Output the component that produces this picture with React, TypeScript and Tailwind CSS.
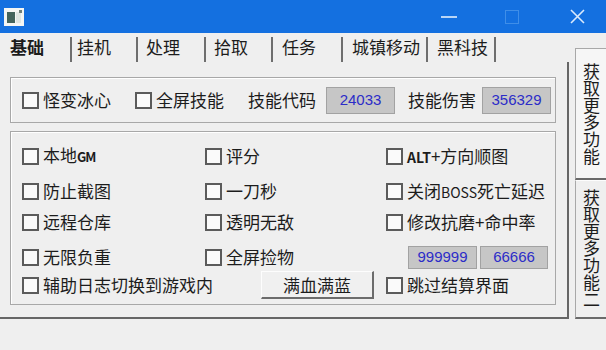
import type { ReactNode } from "react";

function Box() {
  return <span className="w-[17px] h-[17px] shrink-0 border-2 border-[#5b5b5b] bg-[#fafafa]" />;
}

function Check({ children, className = "" }: { children: ReactNode; className?: string }) {
  return (
    <div className={`flex items-center gap-[4px] ${className}`}>
      <Box />
      <span className="text-[17px] leading-[20px] whitespace-nowrap text-[#1c1c1c]">{children}</span>
    </div>
  );
}

function Field({ value, className = "" }: { value: string; className?: string }) {
  return (
    <div
      className={`flex items-center justify-center bg-[#c6c6c6] border border-[#a2a2a2] text-[15px] text-[#2c2cc8] font-['Liberation_Sans',sans-serif] ${className}`}
    >
      {value}
    </div>
  );
}

const tabs = [
  { label: "基础", w: "w-[72px] pl-[10px] font-bold" },
  { label: "挂机", w: "w-[66px] pl-[5px]" },
  { label: "处理", w: "w-[68px] pl-[8px]" },
  { label: "拾取", w: "w-[67px] pl-[8px]" },
  { label: "任务", w: "w-[70px] pl-[9px]" },
  { label: "城镇移动", w: "w-[85px] pl-[9px]" },
  { label: "黑科技", w: "w-[68px] pl-[9px]" },
];

export default function App() {
  return (
    <div className="w-[606px] h-[350px] overflow-hidden bg-[#efefef] text-[#1c1c1c] font-['Noto_Sans_CJK_SC','Liberation_Sans',sans-serif]">
      {/* title bar */}
      <div className="h-[33px] bg-[#1470e0] flex items-center">
        <svg width="20" height="18" viewBox="0 0 20 18" className="ml-[4px]">
          <rect x="0" y="0" width="20" height="18" fill="#f4f6f4" />
          <rect x="3" y="4" width="8" height="11" fill="#44645c" />
          <rect x="12" y="4" width="5" height="11" fill="#dfe6e2" />
          <rect x="15" y="2" width="3" height="3" fill="#6f7f78" />
        </svg>
        <div className="ml-auto flex items-center mr-[21px]">
          <span className="w-[16px] h-[2px] bg-[#b9d5f6]" />
          <span className="ml-[48px] w-[14px] h-[14px] border border-[#3f8ee8]" />
          <svg width="15" height="15" viewBox="0 0 15 15" className="ml-[51px]">
            <path d="M1 1L14 14M14 1L1 14" stroke="#dbeafc" strokeWidth="1.6" />
          </svg>
        </div>
      </div>

      <div className="flex">
        {/* left column */}
        <div className="w-[569px] shrink-0">
          <div className="h-[29px] flex">
            {tabs.map((t) => (
              <div
                key={t.label}
                className={`${t.w} mt-[4px] border-r-2 border-[#6e6e6e] text-[17px] leading-[20px] whitespace-nowrap`}
              >
                {t.label}
              </div>
            ))}
          </div>

          <div className="h-[257px] border-r-2 border-b-2 border-[#666] pl-[10px] pt-[15px]">
            {/* group 1 */}
            <div className="w-[546px] h-[46px] border border-[#a8a8a8] shadow-[inset_1px_1px_0_#fff] flex items-center pl-[11px]">
              <Check className="w-[113px]">怪变冰心</Check>
              <Check className="w-[113px]">全屏技能</Check>
              <span className="w-[78px] text-[17px] leading-[20px]">技能代码</span>
              <Field value="24033" className="w-[69px] h-[27px]" />
              <span className="ml-[13px] w-[74px] text-[17px] leading-[20px]">技能伤害</span>
              <Field value="356329" className="w-[69px] h-[27px]" />
            </div>

            {/* group 2 */}
            <div className="mt-[8px] w-[546px] h-[174px] border border-[#a8a8a8] shadow-[inset_1px_1px_0_#fff] pl-[11px] pt-[9px] flex flex-col">
              <div className="h-[30px] flex items-center">
                <Check className="w-[183px]">
                  本地<span className="text-[13px] font-bold tracking-[-1px]">GM</span>
                </Check>
                <Check className="w-[181px]">评分</Check>
                <Check>
                  <span className="text-[14px] font-bold">ALT</span>+方向顺图
                </Check>
              </div>
              <div className="h-[30px] mt-[5px] flex items-center">
                <Check className="w-[183px]">防止截图</Check>
                <Check className="w-[181px]">一刀秒</Check>
                <Check>
                  关闭<span className="text-[14px]">BOSS</span>死亡延迟
                </Check>
              </div>
              <div className="h-[30px] mt-[1px] flex items-center">
                <Check className="w-[183px]">远程仓库</Check>
                <Check className="w-[181px]">透明无敌</Check>
                <Check>修改抗磨+命中率</Check>
              </div>
              <div className="h-[30px] mt-[5px] flex items-center">
                <Check className="w-[183px]">无限负重</Check>
                <Check className="w-[181px]">全屏捡物</Check>
                <div className="flex gap-[3px] pl-[22px]">
                  <Field value="999999" className="w-[69px] h-[23px]" />
                  <Field value="66666" className="w-[68px] h-[23px]" />
                </div>
              </div>
              <div className="h-[30px] -mt-[2px] flex items-center">
                <div className="w-[364px] flex items-center">
                  <Check className="w-[239px]">辅助日志切换到游戏内</Check>
                  <div className="w-[113px] h-[28px] flex items-center justify-center bg-[#f0f0f0] border-t border-l border-[#fdfdfd] border-r-2 border-b-2 border-r-[#6c6c6c] border-b-[#6c6c6c] text-[17px] leading-[20px]">
                    满血满蓝
                  </div>
                </div>
                <Check>跳过结算界面</Check>
              </div>
            </div>
          </div>
        </div>

        {/* right vertical tabs */}
        <div className="ml-[6px] pt-[15px] flex-1 flex flex-col">
          <div className="h-[132px] bg-[#f6f6f6] border-l border-t border-[#a8a8a8] border-b-2 border-b-[#6a6a6a] flex justify-center pt-[14px]">
            <span className="[writing-mode:vertical-rl] text-[17px] leading-[18px]">获取更多功能</span>
          </div>
          <div className="h-[139px] border-l border-[#a8a8a8] border-t border-t-[#fdfdfd] border-b-2 border-b-[#6a6a6a] flex justify-center pt-[8px]">
            <span className="[writing-mode:vertical-rl] text-[17px] leading-[18px]">获取更多功能二</span>
          </div>
        </div>
      </div>
    </div>
  );
}
